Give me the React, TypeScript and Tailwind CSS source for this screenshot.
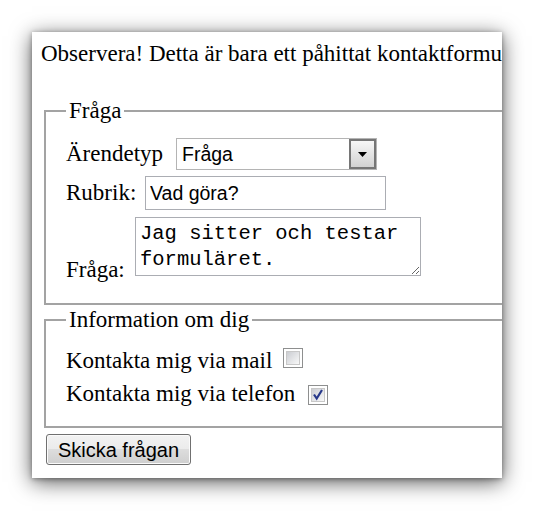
import React from "react";

const serif = "font-['Liberation_Serif','Times_New_Roman',serif]";
const sans = "font-['Liberation_Sans',Arial,sans-serif]";
const mono = "font-['Liberation_Mono','Courier_New',monospace]";

const CheckBox = ({ checked }: { checked?: boolean }) => (
  <span
    role="checkbox"
    aria-checked={!!checked}
    className="inline-block h-[20px] w-[20px] shrink-0 border border-[#8e8f8f] bg-white p-[2px]"
  >
    <span className="flex h-full w-full items-center justify-center border border-[#c8c8c8] bg-[linear-gradient(135deg,#cbcdd2,#f9f9f9)]">
      {checked && (
        <svg width="13" height="13" viewBox="0 0 12 12">
          <path
            d="M2 6 L4.7 10 L10 1.5"
            fill="none"
            stroke="#27388a"
            strokeWidth="2.2"
          />
        </svg>
      )}
    </span>
  </span>
);

export default function App() {
  return (
    <div className="h-[511px] w-[534px] bg-white pl-[32px] pt-[32px]">
      <div className="h-[446px] w-[470px] overflow-hidden bg-white shadow-[0_4px_20px_rgba(0,0,0,0.65),0_1px_5px_rgba(0,0,0,0.35)]">
        <form
          className={`w-[620px] pl-[9px] pt-[9px] text-[23px] leading-[26px] text-black ${serif}`}
        >
          <p className="whitespace-nowrap">
            Observera! Detta är bara ett påhittat kontaktformulär.
          </p>

          <fieldset className="ml-[3px] mt-[31px] border-2 border-[#a3a3a3] pb-[20px] pl-[20px] pt-[14px]">
            <legend className="px-[3px]">Fråga</legend>

            <div className="flex h-[32px] items-center">
              <label htmlFor="typ" className="w-[110px] shrink-0">
                Ärendetyp
              </label>
              <div className="relative h-[32px] w-[201px]">
                <select
                  id="typ"
                  className={`h-full w-full appearance-none border border-[#b4b4b4] bg-white pl-[5px] text-[19.5px] ${sans}`}
                >
                  <option>Fråga</option>
                </select>
                <span className="pointer-events-none absolute bottom-[1px] right-[1px] top-[1px] flex w-[27px] items-center justify-center border-2 border-[#767676] bg-[linear-gradient(#f7f7f7,#d2d2d2)]">
                  <svg width="9" height="5" viewBox="0 0 9 5">
                    <path d="M0 0h9L4.5 5z" fill="#000" />
                  </svg>
                </span>
              </div>
            </div>

            <div className="mt-[6px] flex h-[34px] items-center">
              <label htmlFor="rubrik" className="w-[79px] shrink-0">
                Rubrik:
              </label>
              <input
                id="rubrik"
                defaultValue="Vad göra?"
                className={`h-[34px] w-[241px] border border-[#abadb3] bg-white pl-[4px] text-[19.5px] ${sans}`}
              />
            </div>

            <div className="mt-[7px] flex items-end">
              <label htmlFor="fraga" className="w-[69px] shrink-0">
                Fråga:
              </label>
              <textarea
                id="fraga"
                defaultValue="Jag sitter och testar formuläret."
                className={`mb-[7px] h-[59px] w-[286px] border border-[#abadb3] bg-white pl-[4px] pt-[3px] text-[20.5px] leading-[26px] ${mono}`}
              />
            </div>
          </fieldset>

          <fieldset className="ml-[3px] mt-[2px] border-2 border-[#a3a3a3] pb-[19px] pl-[20px] pt-[15px]">
            <legend className="px-[3px]">Information om dig</legend>
            <div className="flex items-baseline">
              <span className="w-[217px] shrink-0">Kontakta mig via mail</span>
              <CheckBox />
            </div>
            <div className="mt-[7px] flex items-baseline">
              <span className="w-[242px] shrink-0">
                Kontakta mig via telefon
              </span>
              <CheckBox checked />
            </div>
          </fieldset>

          <button
            type="button"
            className={`ml-[5px] mt-[6px] block h-[31px] w-[145px] rounded-[3px] border border-[#707070] bg-[linear-gradient(to_bottom,#f2f2f2_0%,#ebebeb_50%,#dddddd_50%,#cfcfcf_100%)] text-[20px] leading-none shadow-[inset_0_0_0_1px_#fbfbfb] ${sans}`}
          >
            Skicka frågan
          </button>
        </form>
      </div>
    </div>
  );
}
